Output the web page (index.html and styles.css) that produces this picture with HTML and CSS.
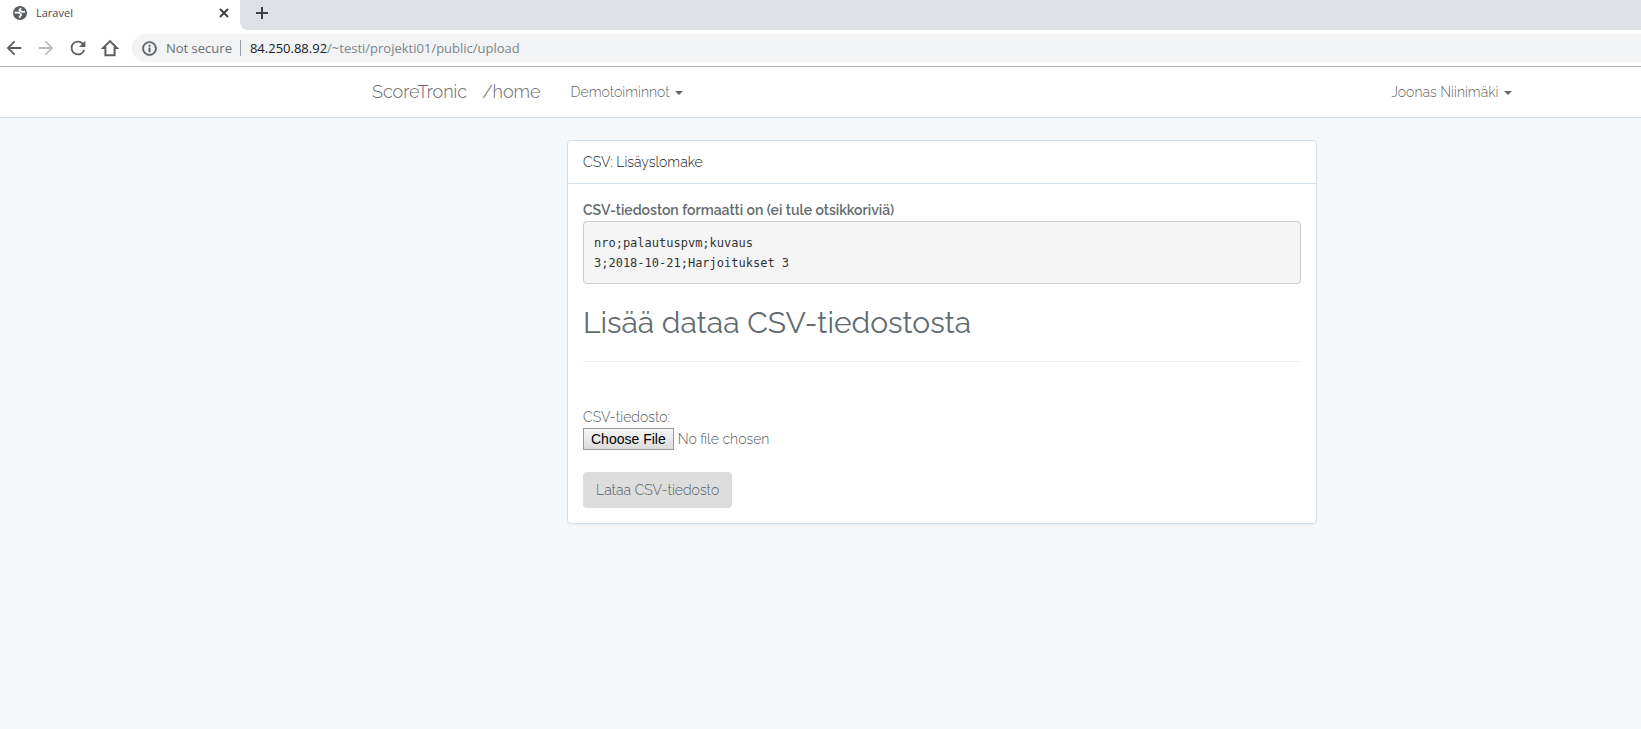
FILE: index.html
```html
<!DOCTYPE html>
<html lang="fi">
<head>
<meta charset="utf-8">
<title>Laravel</title>
<link rel="stylesheet" href="styles.css">
</head>
<body>
<header class="browser">
  <div class="tabs">
    <div class="tab">
      <svg class="globe" viewBox="0 0 24 24" aria-hidden="true"><circle cx="12" cy="12" r="10.500"/><path d="M4 11.500h6c1.500 0 2 1.500 3.500 2v2c-2 .5-1.500 2.500-2.500 4M13 4.500c.5 1.500-2.500 2-2 4 2 1 2.500-.5 4 1.500 1.500 1 3 0 4.500 0" fill="none" stroke="#fff" stroke-width="2.600"/></svg>
      <span class="tab-title">Laravel</span>
      <button class="tab-close" aria-label="Close tab"><svg viewBox="0 0 10 10"><path d="M1 1l8 8M9 1l-8 8"/></svg></button>
    </div>
    <div class="strip">
      <button class="new-tab" aria-label="New tab"><svg viewBox="0 0 12 12"><path d="M6 0v12M0 6h12"/></svg></button>
    </div>
  </div>
  <div class="toolbar">
    <div class="tools">
      <button class="tool" aria-label="Back"><svg viewBox="0 0 24 24"><path d="M20 11H7.830l5.590-5.590L12 4l-8 8 8 8 1.410-1.410L7.830 13H20z"/></svg></button>
      <button class="tool tool-off" aria-label="Forward"><svg viewBox="0 0 24 24"><path d="M12 4l-1.410 1.410L16.170 11H4v2h12.170l-5.580 5.590L12 20l8-8z"/></svg></button>
      <button class="tool" aria-label="Reload"><svg viewBox="0 0 24 24"><path d="M17.650 6.350A7.960 7.960 0 0 0 12 4a8 8 0 1 0 7.730 10h-2.080A6 6 0 1 1 12 6c1.660 0 3.140.69 4.220 1.780L13 11h7V4z"/></svg></button>
      <button class="tool" aria-label="Home"><svg viewBox="0 0 24 24"><path d="M12 4.500L4.500 12H7v8h10v-8h2.500z" fill="none" stroke="currentColor" stroke-width="2.200"/></svg></button>
    </div>
    <div class="address">
      <svg class="info" viewBox="0 0 24 24" aria-hidden="true"><path d="M11 17h2v-6h-2v6zm1-15C6.480 2 2 6.480 2 12s4.480 10 10 10 10-4.480 10-10S17.520 2 12 2zm0 18c-4.410 0-8-3.590-8-8s3.590-8 8-8 8 3.590 8 8-3.590 8-8 8zM11 9h2V7h-2v2z" stroke="currentColor" stroke-width=".6"/></svg>
      <span class="security">Not secure</span>
      <span class="url"><span class="host">84.250.88.92</span>/~testi/projekti01/public/upload</span>
    </div>
  </div>
</header>
<nav class="navbar frame">
  <div class="nav-inner">
    <a class="brand" href="#">ScoreTronic</a>
    <a class="brand" href="#">/home</a>
    <a class="nav-link" href="#">Demotoiminnot <span class="caret"></span></a>
    <a class="nav-link nav-user" href="#">Joonas Niinimäki <span class="caret"></span></a>
  </div>
</nav>
<main class="frame">
  <section class="panel">
    <div class="panel-heading">CSV: Lisäyslomake</div>
    <div class="panel-body">
      <strong class="format">CSV-tiedoston formaatti on (ei tule otsikkoriviä)</strong>
      <pre class="sample">nro;palautuspvm;kuvaus
3;2018-10-21;Harjoitukset 3</pre>
      <h2 class="title">Lisää dataa CSV-tiedostosta</h2>
      <form class="upload">
        <label class="file-label" for="csv">CSV-tiedosto:</label>
        <input class="file" id="csv" type="file">
        <button class="submit" type="submit">Lataa CSV-tiedosto</button>
      </form>
    </div>
  </section>
</main>
</body>
</html>
```
FILE: styles.css
```css
* { box-sizing: border-box; }

body {
  margin: 0;
  background: #f5f8fa;
  color: #636b6f;
  font: 300 14px/22px Raleway, Lato, sans-serif;
}

button { margin: 0; padding: 0; border: 0; background: none; color: inherit; font: inherit; }
svg { display: block; fill: currentColor; }
a { color: inherit; text-decoration: none; }

/* Browser window */
.browser {
  background: #fff;
  border-bottom: 1px solid #b3b3b5;
  color: #5a5d61;
  font: 400 13px/20px "Open Sans", sans-serif;
}
.tabs { display: flex; height: 30px; background: #fff; }
.tab { display: flex; align-items: center; width: 240px; padding: 0 9px 4px 12px; }
.globe { width: 16px; height: 16px; }
.tab-title { flex: 1; margin-left: 8px; font-size: 11px; color: #45484c; }
.tab-close { padding: 2px; color: #3c4043; }
.tab-close svg { width: 10px; height: 10px; stroke: currentColor; stroke-width: 2; }
.strip {
  display: flex;
  flex: 1;
  align-items: flex-start;
  padding: 7px 16px;
  background: #dee1e6;
  border-bottom-left-radius: 8px;
}
.new-tab svg { width: 12px; height: 12px; stroke: #3c4043; stroke-width: 2; }
.toolbar { display: flex; align-items: center; height: 36px; padding-left: 3px; }
.tools { display: flex; gap: 10px; margin-right: 11px; }
.tool svg { width: 22px; height: 22px; }
.tool-off { color: #babcbe; }
.address {
  display: flex;
  flex: 1;
  align-items: center;
  height: 28px;
  padding-left: 9px;
  background: #f1f3f4;
  border-radius: 14px 0 0 14px;
}
.info { width: 17px; height: 17px; }
.security { margin: 0 8px; color: #6b6e72; }
.url { padding-left: 9px; border-left: 1px solid #9a9da1; color: #808488; line-height: 16px; }
.host { color: #202124; }

/* Page columns */
.frame {
  display: grid;
  grid-template-columns: minmax(0, 357fr) minmax(0, 1170px) minmax(0, 114fr);
}
.navbar { background: #fff; border-bottom: 1px solid #d3e0e9; color: #666; }
.nav-inner { grid-column: 2; display: flex; align-items: center; height: 50px; padding: 0 15px; }
.brand { margin-right: 15px; font-size: 18px; }
.nav-link { margin-left: 15px; }
.nav-user { margin-left: auto; }
.caret {
  display: inline-block;
  margin-left: 2px;
  vertical-align: middle;
  border: 4px solid transparent;
  border-top-color: currentColor;
  border-bottom: 0;
}

/* Panel */
.panel {
  grid-column: 2;
  justify-self: center;
  width: 100%;
  max-width: 750px;
  margin: 22px 0;
  background: #fff;
  border: 1px solid #d3e0e9;
  border-radius: 4px;
  box-shadow: 0 1px 1px rgba(0, 0, 0, .05);
}
.panel-heading { padding: 10px 15px; border-bottom: 1px solid #d3e0e9; color: #222; }
.panel-body { padding: 15px; }
.format { display: block; font-weight: 600; }
.sample {
  margin: 0;
  padding: 11px 10px 10px;
  border: 1px solid #ccc;
  border-radius: 4px;
  background: #f5f5f5;
  color: #333;
  font: 12px/20px "DejaVu Sans Mono", monospace;
}
.title {
  margin: 22px 0;
  padding-bottom: 22px;
  border-bottom: 1px solid #eee;
  font-size: 30px;
  font-weight: 400;
  line-height: 33px;
}
.upload {
  display: flex;
  flex-direction: column;
  align-items: flex-start;
  padding-top: 22px;
  color: #555d61;
}
.file { font: inherit; height: 22px; }
.file::file-selector-button {
  height: 22px;
  padding: 0 7px;
  border: 1px solid #999;
  border-radius: 0;
  background: linear-gradient(#f6f6f6, #dcdcdc);
  color: #000;
  font: 14px/20px "Liberation Sans", sans-serif;
}
.submit { margin-top: 22px; padding: 7px 13px; border-radius: 4px; background: #ddd; }
```
